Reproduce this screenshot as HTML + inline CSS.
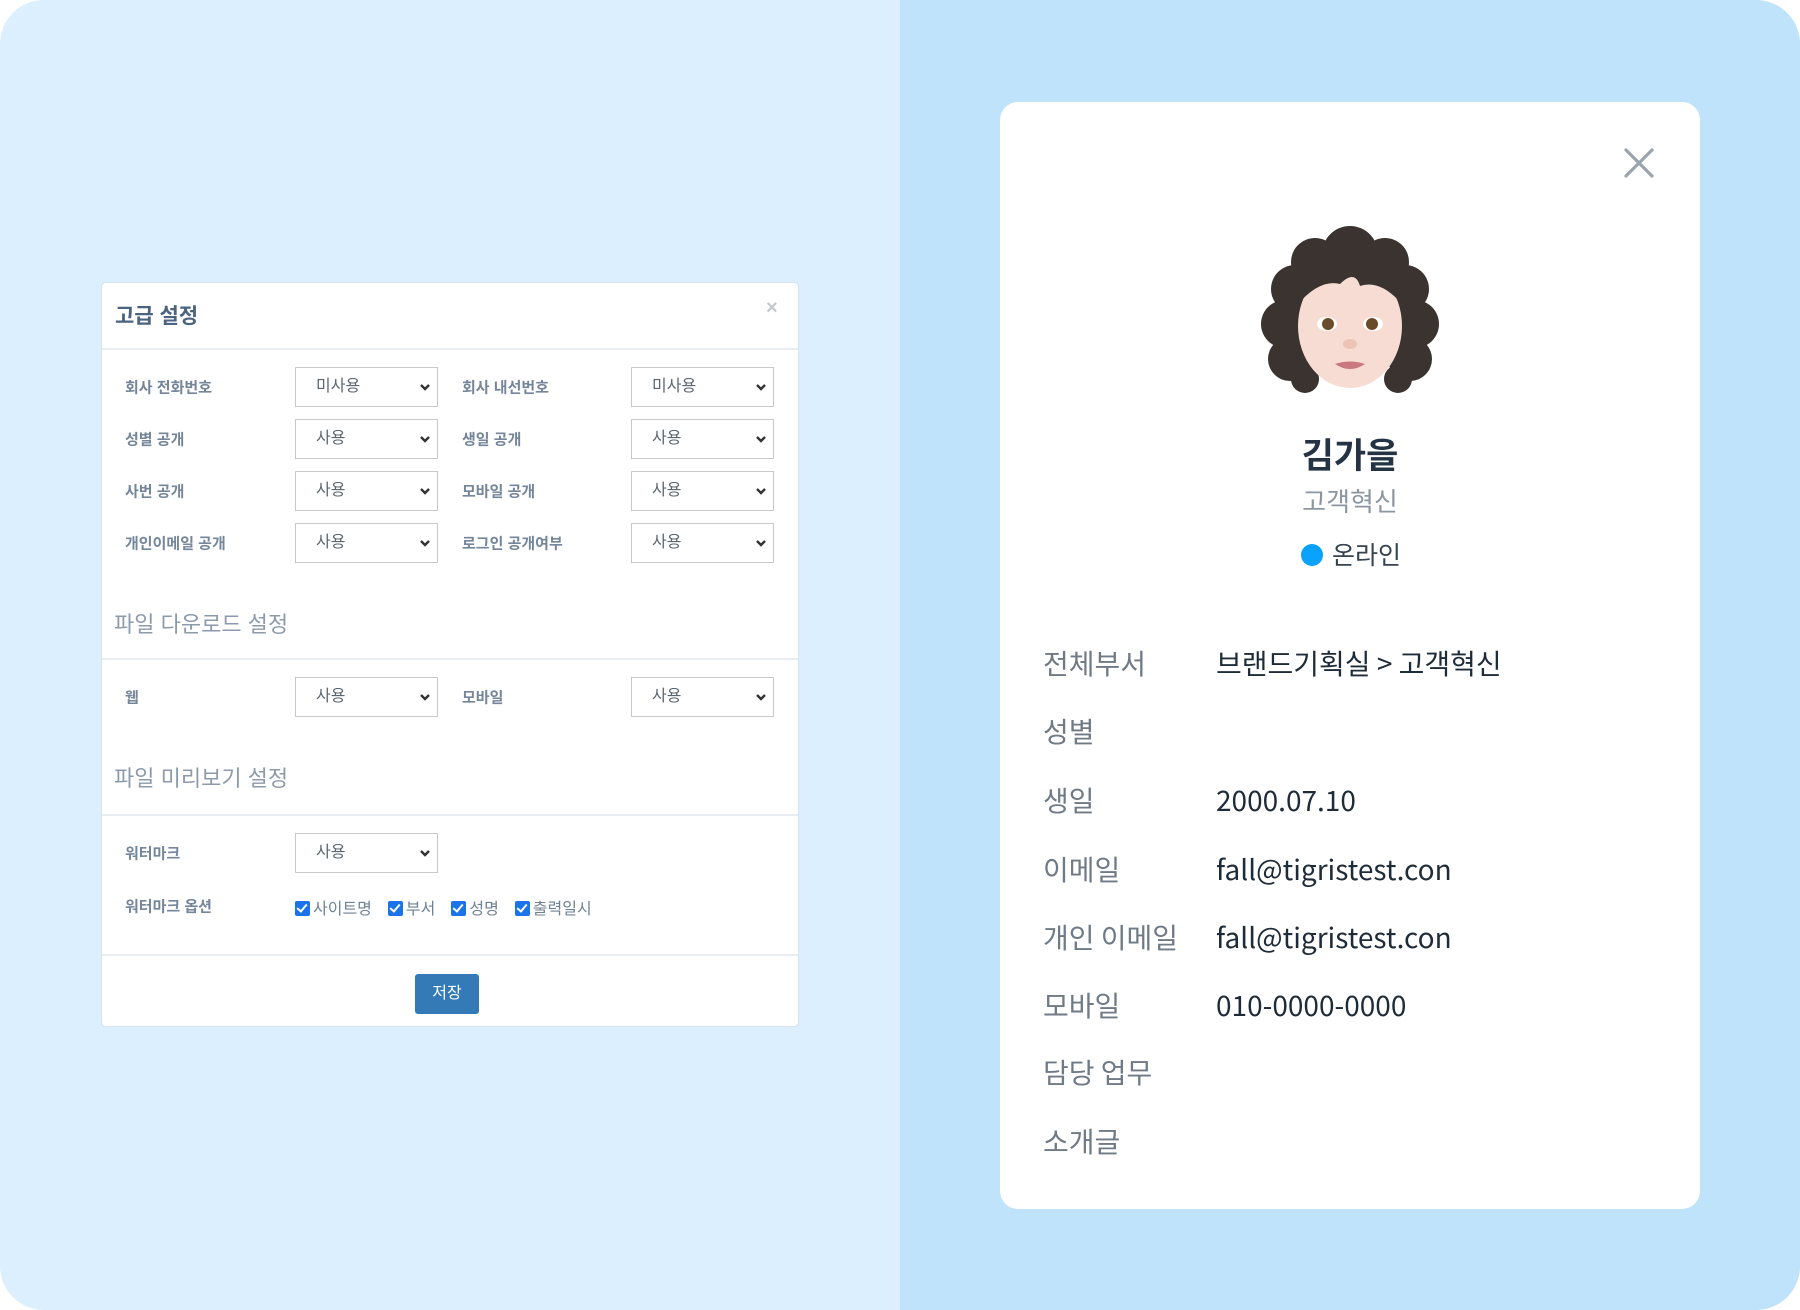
<!DOCTYPE html>
<html><head><meta charset="utf-8"><style>
*{margin:0;padding:0;box-sizing:border-box}
html,body{width:1800px;height:1310px;background:#fff;overflow:hidden}
#bg{position:absolute;left:0;top:0;width:1800px;height:1310px;border-radius:44px;overflow:hidden;background:#dcefff}
#rbg{position:absolute;left:900px;top:0;width:900px;height:1310px;background:#bee3fb}
.ab{position:absolute;white-space:nowrap}
#modal{position:absolute;left:101px;top:282px;width:698px;height:745px;background:#fff;border:1px solid #d6e2ee;border-radius:5px;font-family:"Liberation Sans","Noto Sans CJK KR",sans-serif}
.hl{position:absolute;left:0;width:696px;height:2px;background:#e8edf2}
.lb{position:absolute;font-size:15px;font-weight:bold;color:#75869b;white-space:nowrap;transform:translateY(-50%)}
.sel{position:absolute;width:143px;height:40px;border:1px solid #c8c8c8;background:#fff;font-size:16px;color:#5c6670;padding-left:20px;line-height:38px;transform:translateY(-50%)}
.sel svg{position:absolute;right:6px;top:14px}
.sec{position:absolute;left:12px;font-size:22px;color:#8c9aab;transform:translateY(-50%)}
#card{position:absolute;left:1000px;top:102px;width:700px;height:1107px;background:#fff;border-radius:18px;font-family:"Noto Sans CJK KR","Liberation Sans",sans-serif}
.fl{position:absolute;left:43px;font-size:28px;color:#6f7a86;transform:translateY(-50%);white-space:nowrap}
.fv{position:absolute;left:216px;font-size:28px;color:#1e2b38;transform:translateY(-50%);white-space:nowrap}
.ck{margin-right:16px}
.cb{display:inline-block;width:15px;height:15px;background:#1a73e8;border-radius:2px;vertical-align:-2px;margin-right:3px;position:relative}
.cb:after{content:"";position:absolute;left:4px;top:1px;width:4px;height:8px;border:solid #fff;border-width:0 2px 2px 0;transform:rotate(40deg)}
</style></head><body>
<div id="bg">
<div id="rbg"></div>
<div id="modal">
 <div class="ab" style="left:13px;top:17px;font-size:21px;font-weight:bold;color:#4b6280">고급 설정</div>
 <div class="ab" style="left:664px;top:14px;font-size:20px;font-weight:bold;color:#c4c8cc">×</div>
 <div class="hl" style="top:65px"></div>
 <div class="lb" style="left:23px;top:104px">회사 전화번호</div>
 <div class="sel" style="left:193px;top:104px">미사용<svg width="12" height="10" viewBox="0 0 12 10"><path d="M2 3l4 4 4-4" stroke="#333" stroke-width="2.4" fill="none"/></svg></div>
 <div class="lb" style="left:360px;top:104px">회사 내선번호</div>
 <div class="sel" style="left:529px;top:104px">미사용<svg width="12" height="10" viewBox="0 0 12 10"><path d="M2 3l4 4 4-4" stroke="#333" stroke-width="2.4" fill="none"/></svg></div>

 <div class="lb" style="left:23px;top:156px">성별 공개</div>
 <div class="sel" style="left:193px;top:156px">사용<svg width="12" height="10" viewBox="0 0 12 10"><path d="M2 3l4 4 4-4" stroke="#333" stroke-width="2.4" fill="none"/></svg></div>
 <div class="lb" style="left:360px;top:156px">생일 공개</div>
 <div class="sel" style="left:529px;top:156px">사용<svg width="12" height="10" viewBox="0 0 12 10"><path d="M2 3l4 4 4-4" stroke="#333" stroke-width="2.4" fill="none"/></svg></div>

 <div class="lb" style="left:23px;top:208px">사번 공개</div>
 <div class="sel" style="left:193px;top:208px">사용<svg width="12" height="10" viewBox="0 0 12 10"><path d="M2 3l4 4 4-4" stroke="#333" stroke-width="2.4" fill="none"/></svg></div>
 <div class="lb" style="left:360px;top:208px">모바일 공개</div>
 <div class="sel" style="left:529px;top:208px">사용<svg width="12" height="10" viewBox="0 0 12 10"><path d="M2 3l4 4 4-4" stroke="#333" stroke-width="2.4" fill="none"/></svg></div>

 <div class="lb" style="left:23px;top:260px">개인이메일 공개</div>
 <div class="sel" style="left:193px;top:260px">사용<svg width="12" height="10" viewBox="0 0 12 10"><path d="M2 3l4 4 4-4" stroke="#333" stroke-width="2.4" fill="none"/></svg></div>
 <div class="lb" style="left:360px;top:260px">로그인 공개여부</div>
 <div class="sel" style="left:529px;top:260px">사용<svg width="12" height="10" viewBox="0 0 12 10"><path d="M2 3l4 4 4-4" stroke="#333" stroke-width="2.4" fill="none"/></svg></div>

 <div class="sec" style="top:340px">파일 다운로드 설정</div>
 <div class="hl" style="top:375px"></div>
 <div class="lb" style="left:23px;top:414px">웹</div>
 <div class="sel" style="left:193px;top:414px">사용<svg width="12" height="10" viewBox="0 0 12 10"><path d="M2 3l4 4 4-4" stroke="#333" stroke-width="2.4" fill="none"/></svg></div>
 <div class="lb" style="left:360px;top:414px">모바일</div>
 <div class="sel" style="left:529px;top:414px">사용<svg width="12" height="10" viewBox="0 0 12 10"><path d="M2 3l4 4 4-4" stroke="#333" stroke-width="2.4" fill="none"/></svg></div>

 <div class="sec" style="top:494px">파일 미리보기 설정</div>
 <div class="hl" style="top:531px"></div>
 <div class="lb" style="left:23px;top:570px">워터마크</div>
 <div class="sel" style="left:193px;top:570px">사용<svg width="12" height="10" viewBox="0 0 12 10"><path d="M2 3l4 4 4-4" stroke="#333" stroke-width="2.4" fill="none"/></svg></div>
 <div class="lb" style="left:23px;top:623px">워터마크 옵션</div>
 <div class="ab" style="left:193px;top:612px;font-size:16px;color:#6f8196">
  <span class="ck"><span class="cb"></span>사이트명</span><span class="ck"><span class="cb"></span>부서</span><span class="ck"><span class="cb"></span>성명</span><span class="ck"><span class="cb"></span>출력일시</span></div>
 <div class="hl" style="top:671px"></div>
 <div class="ab" style="left:313px;top:691px;width:64px;height:40px;background:#337ab7;border-radius:3px;color:#fff;font-size:16px;line-height:40px;text-align:center">저장</div>
</div>

<div id="card">
 <svg class="ab" style="left:624px;top:46px" width="30" height="30" viewBox="0 0 30 30"><path d="M2 2L28 28M28 2L2 28" stroke="#9aa4b0" stroke-width="3.2" stroke-linecap="round"/></svg>
 <svg class="ab" style="left:260px;top:122px" width="180" height="175" viewBox="0 0 180 175">
  <g fill="#3a3330">
   <circle cx="90" cy="30" r="28"/><circle cx="55" cy="38" r="24"/><circle cx="125" cy="38" r="24"/>
   <circle cx="35" cy="65" r="24"/><circle cx="145" cy="65" r="24"/>
   <circle cx="25" cy="100" r="24"/><circle cx="155" cy="100" r="24"/>
   <circle cx="30" cy="135" r="22"/><circle cx="150" cy="135" r="22"/>
   <circle cx="45" cy="155" r="14"/><circle cx="138" cy="155" r="14"/>
  </g>
  <ellipse cx="90" cy="102" rx="52" ry="62" fill="#f6dcd2"/>
  <path d="M38 80 Q50 30 90 40 Q130 30 142 80 Q120 55 100 62 Q95 45 80 60 Q60 55 38 80Z" fill="#3a3330"/>
  <ellipse cx="67" cy="100" rx="10" ry="7" fill="#fff"/><circle cx="68" cy="100" r="6" fill="#6b4c2a"/>
  <ellipse cx="113" cy="100" rx="10" ry="7" fill="#fff"/><circle cx="112" cy="100" r="6" fill="#6b4c2a"/>
  <ellipse cx="90" cy="120" rx="7" ry="5" fill="#ecc4b6"/>
  <path d="M75 140 Q90 135 105 140 Q90 150 75 140Z" fill="#c9787f"/>
 </svg>
 <div class="ab" style="left:0;width:700px;text-align:center;top:326px;font-size:35px;font-weight:bold;color:#253444">김가을</div>
 <div class="ab" style="left:0;width:700px;text-align:center;top:380px;font-size:26px;color:#8c96a0">고객혁신</div>
 <div class="ab" style="left:301px;top:442px;width:22px;height:22px;border-radius:50%;background:#0aa1ff"></div>
 <div class="ab" style="left:332px;top:434px;font-size:25px;color:#35424f">온라인</div>
 <div class="fl" style="top:561px">전체부서</div><div class="fv" style="top:561px">브랜드기획실 &gt; 고객혁신</div>
 <div class="fl" style="top:629px">성별</div>
 <div class="fl" style="top:698px">생일</div><div class="fv" style="top:698px">2000.07.10</div>
 <div class="fl" style="top:767px">이메일</div><div class="fv" style="top:767px">fall@tigristest.con</div>
 <div class="fl" style="top:835px">개인 이메일</div><div class="fv" style="top:835px">fall@tigristest.con</div>
 <div class="fl" style="top:903px">모바일</div><div class="fv" style="top:903px">010-0000-0000</div>
 <div class="fl" style="top:970px">담당 업무</div>
 <div class="fl" style="top:1039px">소개글</div>
</div>
</div>
</body></html>
